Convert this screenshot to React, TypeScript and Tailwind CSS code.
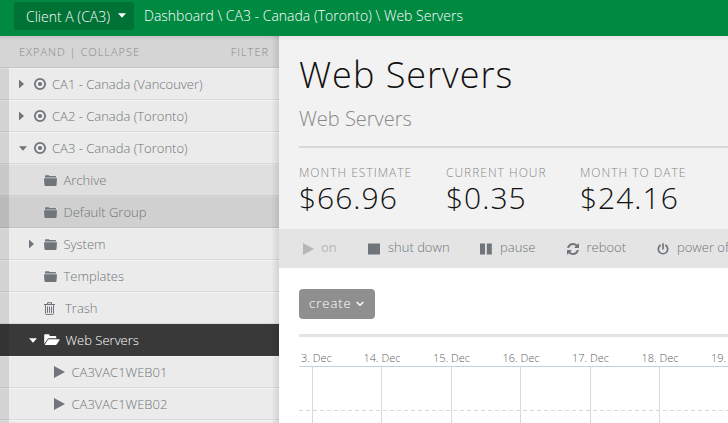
import React from 'react';

type IconProps = { className?: string };

const CaretRight = ({ className = '' }: IconProps) => (
  <svg className={className} width="5" height="10" viewBox="0 0 5 10" fill="currentColor"><path d="M0 .5v9L5 5z" /></svg>
);
const CaretDown = ({ className = '' }: IconProps) => (
  <svg className={className} width="8" height="5" viewBox="0 0 8 5" fill="currentColor"><path d="M0 .3h8L4 4.8z" /></svg>
);
const Target = () => (
  <svg width="12" height="12" viewBox="0 0 12 12"><circle cx="6" cy="6" r="5.1" fill="none" stroke="currentColor" strokeWidth="1.8" /><circle cx="6" cy="6" r="2.1" fill="currentColor" /></svg>
);
const Folder = () => (
  <svg width="13" height="11" viewBox="0 0 13 11" fill="currentColor"><path d="M1 2.600V1Q1 .2 1.800.2H4.700L5.700 1H11.200Q12 1 12 1.800V2.600z" /><path d="M0 3.300H13L12.500 10.200Q12.400 10.900 11.700 10.900H1.300Q.6 10.900.5 10.200z" /></svg>
);
const FolderOpen = () => (
  <svg width="16" height="12" viewBox="0 0 16 12" fill="currentColor"><path d="M.2 10V1.300Q.2.300 1.200.300H4.600Q5.400.300 5.600 1.300V2H11.200Q12.300 2 12.300 3V4.200H5.400Q4.400 4.200 3.600 5z" /><path d="M5.500 5.200H15.300Q16 5.200 15.600 5.900L12.800 10.200Q12.300 11 11.300 11H1.300Q.6 11 1 10.400L3.700 6.100Q4.300 5.200 5.500 5.200z" /></svg>
);
const Trash = () => (
  <svg width="11" height="13" viewBox="0 0 11 13" fill="none" stroke="currentColor"><path d="M0 2.500h11M3.500 2.300V.7h4v1.600M1.500 3v8.500q0 .9.9.9h6.200q.9 0 .9-.9V3M3.500 4.500v6.300M5.500 4.500v6.300M7.500 4.500v6.300" /></svg>
);
const Play = ({ className = '' }: IconProps) => (
  <svg className={className} width="11" height="12" viewBox="0 0 11 12" fill="currentColor"><path d="M0 0v12L11 6z" /></svg>
);
const Stop = () => <svg width="12" height="12" viewBox="0 0 12 12" fill="currentColor"><path d="M0 .5h12v11H0z" /></svg>;
const Pause = () => <svg width="12" height="12" viewBox="0 0 12 12" fill="currentColor"><path d="M0 .5h5v11H0zM6.800.5h5v11h-5z" /></svg>;
const Refresh = () => (
  <svg width="12" height="12" viewBox="0 0 1536 1536" fill="currentColor"><path d="M1511 928q0 5-1 7-64 268-268 434.500T764 1536q-146 0-282.500-55T238 1324l-129 129q-19 19-45 19t-45-19-19-45V960q0-26 19-45t45-19h448q26 0 45 19t19 45-19 45l-137 137q71 66 161 102t187 36q134 0 250-65t186-179q11-17 53-117 8-23 30-23h192q13 0 22.500 9.500t9.500 22.500zm25-800v448q0 26-19 45t-45 19h-448q-26 0-45-19t-19-45 19-45l138-138Q969 256 768 256q-134 0-250 65T332 500q-11 17-53 117-8 23-30 23H50q-13 0-22.500-9.500T18 608v-7q65-268 270-434.500T768 0q146 0 284 55.500T1297 212l130-129q19-19 45-19t45 19 19 45z" /></svg>
);
const Power = () => (
  <svg width="12" height="12" viewBox="0 0 12 12" fill="none" stroke="currentColor" strokeWidth="1.700" strokeLinecap="round"><path d="M6 .9v4.800M3.200 2.300a4.700 4.700 0 1 0 5.600 0" /></svg>
);
const Chevron = () => (
  <svg width="8" height="6" viewBox="0 0 8 6" fill="none" stroke="currentColor" strokeWidth="1.500"><path d="M.7 1 4 4.200 7.300 1" /></svg>
);

type RowProps = {
  label: string;
  icon: React.ReactNode;
  pad: string;
  gap: string;
  caret?: 'right' | 'down';
  tone?: string;
};

function Row({ label, icon, pad, gap, caret, tone = 'bg-[#ebebeb] text-[#6f757a] border-t-[#f4f4f4] border-b-[#dadada]' }: RowProps) {
  return (
    <div className={`flex h-8 items-stretch border-y ${tone}`}>
      <div className="-my-px w-[9px] shrink-0 bg-black/10" />
      <div className={`flex items-center ${pad}`}>
        <span className="flex w-[15px] shrink-0 items-center">
          {caret === 'right' && <CaretRight />}
          {caret === 'down' && <CaretDown />}
        </span>
        {icon}
        <span className={`${gap} whitespace-nowrap pt-[2px]`}>{label}</span>
      </div>
    </div>
  );
}

const stats = [
  { label: 'MONTH ESTIMATE', value: '$66.96', width: 'w-[147px]' },
  { label: 'CURRENT HOUR', value: '$0.35', width: 'w-[134px]' },
  { label: 'MONTH TO DATE', value: '$24.16', width: 'w-[130px]' },
];

export default function App() {
  return (
    <div className="flex h-[423px] w-[728px] flex-col overflow-hidden bg-white font-['Open_Sans',sans-serif] font-light">
      <header className="flex h-9 shrink-0 items-start bg-[#008941] pt-[2px] text-[14px] text-white">
        <button className="ml-[14px] flex h-7 w-[120px] items-center rounded-[3px] bg-[#007236] pl-3">
          <span className="w-[92px] text-left whitespace-nowrap">Client A (CA3)</span><CaretDown className="mb-px" />
        </button>
        <span className="ml-[10px] whitespace-nowrap leading-7">Dashboard \ CA3 - Canada (Toronto) \ Web Servers</span>
      </header>
      <div className="flex min-h-0 flex-1">
        <aside className="relative w-[279px] shrink-0 overflow-hidden text-[13px]">
          <div className="flex h-8 items-center justify-between border-b border-[#c6c6c6] bg-[#d5d5d5] pl-[19px] pr-[10px] pt-px text-[11px] tracking-[1px] text-[#888]">
            <span>EXPAND | COLLAPSE</span><span>FILTER</span>
          </div>
          <Row label="CA1 - Canada (Vancouver)" icon={<Target />} caret="right" pad="pl-[10px]" gap="ml-[6px]" />
          <Row label="CA2 - Canada (Toronto)" icon={<Target />} caret="right" pad="pl-[10px]" gap="ml-[6px]" />
          <Row label="CA3 - Canada (Toronto)" icon={<Target />} caret="down" pad="pl-[10px]" gap="ml-[6px]" />
          <Row label="Archive" icon={<Folder />} pad="pl-[20px]" gap="ml-[6.5px]" tone="bg-[#dfdfdf] text-[#6f757a] border-t-[#e8e8e8] border-b-[#cecece]" />
          <Row label="Default Group" icon={<Folder />} pad="pl-[20px]" gap="ml-[6.5px]" tone="bg-[#d0d0d0] text-[#6f757a] border-t-[#d8d8d8] border-b-[#c0c0c0]" />
          <Row label="System" icon={<Folder />} caret="right" pad="pl-[20px]" gap="ml-[6.5px]" />
          <Row label="Templates" icon={<Folder />} pad="pl-[20px]" gap="ml-[6.5px]" />
          <Row label="Trash" icon={<Trash />} pad="pl-[20px]" gap="ml-[10px]" />
          <Row label="Web Servers" icon={<FolderOpen />} caret="down" pad="pl-[20px]" gap="ml-[5.5px]" tone="bg-[#393939] text-white border-[#393939]" />
          <Row label="CA3VAC1WEB01" icon={<Play />} pad="pl-[30px]" gap="ml-[6.5px]" />
          <Row label="CA3VAC1WEB02" icon={<Play />} pad="pl-[30px]" gap="ml-[6.5px]" />
          <Row label="" icon={null} pad="" gap="" />
          <div className="absolute inset-y-0 right-0 w-2 bg-linear-to-r from-transparent to-black/10" />
          <div className="absolute inset-x-0 top-0 h-1 bg-linear-to-b from-black/10 to-transparent" />
        </aside>
        <main className="flex min-w-0 flex-1 flex-col">
          <section className="h-[193px] shrink-0 bg-linear-to-b from-[#e4e4e4] to-[#f2f2f2] to-[5px] pl-5">
            <h1 className="pt-[14px] text-[36px] leading-[50px] tracking-[1px] text-[#111]">Web Servers</h1>
            <h2 className="mt-[5px] text-[20px] leading-[28px] text-[#888]">Web Servers</h2>
            <div className="mt-[13px] h-[2px] bg-[#d8d8d8]" />
            <div className="flex pt-[16px]">
              {stats.map((s) => (
                <div key={s.label} className={`${s.width} shrink-0 whitespace-nowrap`}>
                  <div className="text-[12px] leading-[18px] tracking-[1px] text-[#888]">{s.label}</div>
                  <div className="text-[30px] leading-[32px] tracking-[1px] text-[#111]">{s.value}</div>
                </div>
              ))}
            </div>
          </section>
          <nav className="flex h-[39px] shrink-0 items-center overflow-hidden whitespace-nowrap bg-[#e4e4e4] pl-6 text-[13px] leading-[18px] text-[#6f757a]">
            <div className="flex w-[65px] shrink-0 items-center opacity-40"><Play /><span className="ml-[7px] pb-[3px] font-normal">on</span></div>
            <div className="flex w-[112px] shrink-0 items-center"><Stop /><span className="ml-2 pb-[3px]">shut down</span></div>
            <div className="flex w-[87px] shrink-0 items-center"><Pause /><span className="ml-2 pb-[3px]">pause</span></div>
            <div className="flex w-[90px] shrink-0 items-center"><Refresh /><span className="ml-[7.5px] pb-[3px]">reboot</span></div>
            <div className="flex shrink-0 items-center"><Power /><span className="ml-2 pb-[3px]">power off</span></div>
          </nav>
          <section className="flex flex-1 flex-col pl-5 pt-[21px]">
            <button className="flex h-[30px] w-[76px] shrink-0 items-center rounded-[4px] bg-[#8f8f8f] pl-[10px] text-[13px] tracking-[1px] text-white"><span className="w-[47px] text-left">create</span><Chevron /></button>
            <div className="mt-[15px] h-[3px] shrink-0 bg-[#e4e4e4]" />
            <svg className="shrink-0" width="429" height="86" fontFamily="'Open Sans', sans-serif" fontSize="11" fontWeight="300" fill="#606060">
              <text x="2" y="25">3. Dec</text>
              {['14. Dec', '15. Dec', '16. Dec', '17. Dec', '18. Dec', '19. Dec'].map((d, i) => <text key={d} x={64.500 + i * 69.500} y="25">{d}</text>)}
              <path d="M13.500 30v56M82.500 30v56M152.500 30v56M221.500 30v56M291.500 30v56M360.500 30v56" stroke="#d8d8d8" />
              <path d="M0 29.500h429" stroke="#c0d0e0" />
              <path d="M0 73.500h429" stroke="#d8d8d8" strokeDasharray="4 3" />
            </svg>
          </section>
        </main>
      </div>
    </div>
  );
}
